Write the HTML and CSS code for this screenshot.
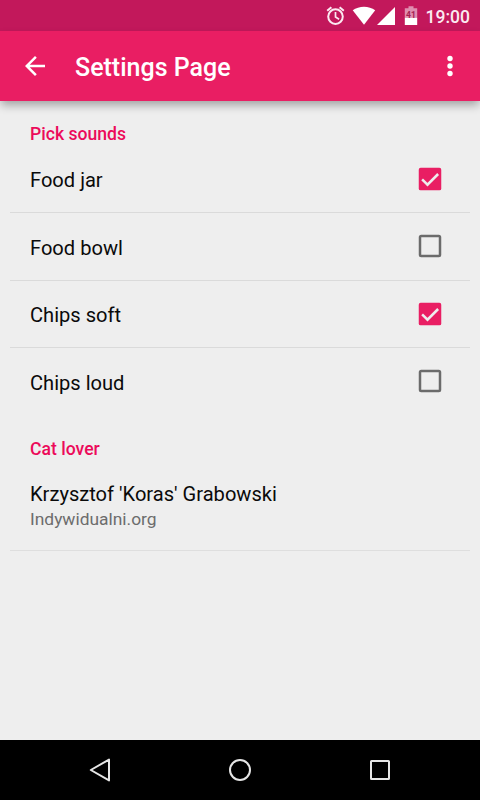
FILE: index.html
```html
<!DOCTYPE html>
<html lang="en">
<head>
<meta charset="utf-8">
<title>Settings Page</title>
<link rel="stylesheet" href="styles.css">
</head>
<body>
<div class="screen">
  <div class="status">
    <svg class="status-icons" width="96" height="31" viewBox="324 0 96 31">
      <g fill="none" stroke="#fbeaf1" stroke-width="2">
        <circle cx="335.500" cy="16.600" r="7.300"/>
        <path d="M335.500 12v5l3.600 2.300" stroke-width="1.700"/>
        <path d="M327.200 10.800l4.200-3.600M343.800 10.800l-4.200-3.600"/>
      </g>
      <path fill="#fff" d="M352.700 10.300C359 5.400 369 5.400 375.200 10.300L364 24.800z"/>
      <path fill="#fff" d="M377 25L395 7v18z"/>
      <path fill="#df8eb0" d="M408.500 6.300h5v2h3.700v9.400h-12.400V8.300h3.700z"/>
      <path fill="#fff" d="M404.800 17.700h12.400v7.300h-12.400z"/>
      <text class="battery-level" x="411" y="18.200" text-anchor="middle">41</text>
    </svg>
    <span class="clock">19:00</span>
  </div>
  <header class="appbar">
    <svg class="back" width="30" height="30" viewBox="0 0 24 24"><path fill="#fff" d="M20 11H7.830l5.590-5.590L12 4l-8 8 8 8 1.410-1.410L7.830 13H20v-2z"/></svg>
    <h1 class="title">Settings Page</h1>
    <svg class="more" width="30" height="30" viewBox="0 0 24 24" fill="#fff"><circle cx="12" cy="6" r="2.150"/><circle cx="12" cy="12" r="2.150"/><circle cx="12" cy="18" r="2.150"/></svg>
  </header>
  <main class="content">
    <h2 class="section">Pick sounds</h2>
    <div class="row"><span>Food jar</span><svg class="box" viewBox="0 0 24 24"><rect x="3" y="3" width="18" height="18" rx="1.500" fill="#e91e63"/><path d="M5.700 12.300l4.300 4.200 8.500-8.500" fill="none" stroke="#eee" stroke-width="2"/></svg></div>
    <div class="row"><span>Food bowl</span><svg class="box" viewBox="0 0 24 24"><rect x="4" y="4" width="16" height="16" rx="1" fill="none" stroke="#6b6b6b" stroke-width="2"/></svg></div>
    <div class="row"><span>Chips soft</span><svg class="box" viewBox="0 0 24 24"><rect x="3" y="3" width="18" height="18" rx="1.500" fill="#e91e63"/><path d="M5.700 12.300l4.300 4.200 8.500-8.500" fill="none" stroke="#eee" stroke-width="2"/></svg></div>
    <div class="row last"><span>Chips loud</span><svg class="box" viewBox="0 0 24 24"><rect x="4" y="4" width="16" height="16" rx="1" fill="none" stroke="#6b6b6b" stroke-width="2"/></svg></div>
    <h2 class="section second">Cat lover</h2>
    <div class="person">
      <div class="name">Krzysztof 'Koras' Grabowski</div>
      <div class="site">Indywidualni.org</div>
    </div>
  </main>
  <nav class="navbar">
    <svg width="30" height="30" viewBox="0 0 30 30"><path d="M5.800 15L24 4.600v20.800z"/></svg>
    <svg width="30" height="30" viewBox="0 0 30 30"><circle cx="15" cy="15" r="10"/></svg>
    <svg width="30" height="30" viewBox="0 0 30 30"><rect x="6" y="6" width="18" height="18" rx=".5"/></svg>
  </nav>
</div>
</body>
</html>
```
FILE: styles.css
```css
* { box-sizing: border-box; }
body { margin: 0; font-family: Roboto, sans-serif; }
svg { display: block; flex: none; }
.screen {
  width: 480px;
  height: 800px;
  display: flex;
  flex-direction: column;
  background: #eee;
  overflow: hidden;
}
.status {
  height: 31px;
  flex: none;
  display: flex;
  justify-content: flex-end;
  padding-right: 10px;
  background: #c2185b;
}
.clock {
  width: 50px;
  text-align: right;
  white-space: nowrap;
  font-size: 17.5px;
  font-weight: 500;
  line-height: 34px;
  color: #fbeaf1;
}
.battery-level {
  font-size: 8.5px;
  font-weight: 700;
  fill: #a51d50;
}
.appbar {
  height: 70px;
  flex: none;
  display: flex;
  align-items: center;
  padding: 0 15px 0 20px;
  background: #e91e63;
  box-shadow: 0 5px 9px -1px rgba(0, 0, 0, .33);
}
.title {
  flex: 1;
  margin: 4px 0 0 25px;
  font-size: 25px;
  font-weight: 500;
  line-height: 30px;
  color: #fff;
}
.content { flex: 1; padding: 0 10px; }
.section {
  margin: 0;
  padding: 22px 20px 0;
  height: 44.5px;
  font-size: 17.6px;
  font-weight: 500;
  line-height: 22px;
  color: #ec0a5a;
}
.row {
  height: 67.5px;
  display: flex;
  align-items: center;
  justify-content: space-between;
  padding: 0 25px 0 20px;
  border-bottom: 1px solid #dadada;
  font-size: 20.1px;
  line-height: 24px;
  color: #0a0a0a;
}
.row span { padding-top: 3px; }
.box { width: 30px; height: 30px; }
.last { border-bottom-color: transparent; }
.second { height: 53.5px; }
.person {
  height: 82px;
  padding: 12px 20px 0;
  border-bottom: 1px solid #dedede;
}
.name { font-size: 20.1px; line-height: 26px; color: #0a0a0a; }
.site { font-size: 17.4px; line-height: 25px; color: #6c6c6c; }
.navbar {
  height: 60px;
  flex: none;
  display: flex;
  align-items: center;
  justify-content: center;
  gap: 110px;
  background: #000;
}
.navbar svg { fill: none; stroke: #e6e6e6; stroke-width: 2; stroke-linejoin: round; }
```
